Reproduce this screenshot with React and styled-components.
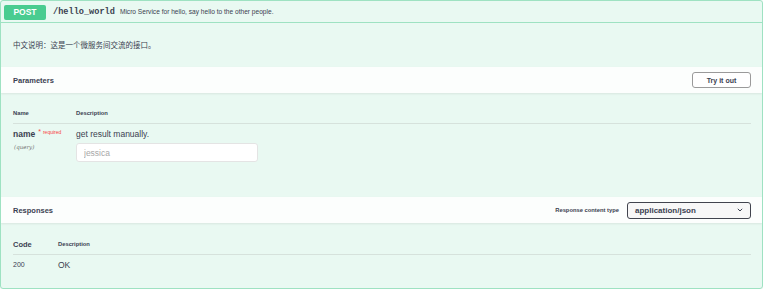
import React from 'react'
import styled, { createGlobalStyle } from 'styled-components'

const GlobalStyle = createGlobalStyle`
  body {
    margin: 0;
    background: #fff;
    font-family: "Liberation Sans", Arial, sans-serif;
    color: #3b4151;
  }
`

const Opblock = styled.div`
  box-sizing: border-box;
  width: 763px;
  height: 289px;
  border: 1px solid #9ee2c2;
  border-radius: 3px;
  background: rgba(73, 204, 144, 0.12);
  box-shadow: 0 0 2px rgba(0, 0, 0, 0.12);
  display: flex;
  flex-direction: column;
  overflow: hidden;
`

const Summary = styled.div`
  box-sizing: border-box;
  height: 22px;
  display: flex;
  align-items: center;
  padding: 0 3px;
  border-bottom: 1px solid #9ee2c2;
`

const Method = styled.span`
  width: 42px;
  height: 15px;
  border-radius: 2px;
  background: #49cc90;
  color: #fff;
  font-weight: bold;
  font-size: 8.5px;
  display: flex;
  align-items: center;
  justify-content: center;
  margin-top: 1px;
`

const Path = styled.span`
  margin-left: 7px;
  font-family: "Liberation Mono", "DejaVu Sans Mono", monospace;
  font-weight: bold;
  font-size: 8.6px;
`

const SummaryText = styled.span`
  margin-left: 5px;
  font-size: 6.6px;
  color: #3b4151;
`

const Description = styled.div`
  box-sizing: border-box;
  height: 44px;
  padding: 16px 12px 0;
  font-family: "Liberation Sans", "Noto Sans CJK SC", sans-serif;
  font-size: 7.5px;
`

const SectionHeader = styled.div`
  box-sizing: border-box;
  height: 26px;
  padding: 0 11px 0 12px;
  display: flex;
  align-items: center;
  justify-content: space-between;
  background: rgba(255, 255, 255, 0.85);
  box-shadow: 0 1px 2px rgba(0, 0, 0, 0.08);
`

const SectionTitle = styled.h4`
  margin: 0;
  font-size: 7.5px;
  font-weight: bold;
`

const TryButton = styled.button`
  box-sizing: border-box;
  width: 59px;
  height: 16px;
  border: 1.5px solid #9a9a9a;
  border-radius: 3px;
  background: #fff;
  font-family: "Liberation Sans", Arial, sans-serif;
  font-weight: bold;
  font-size: 7px;
  color: #3b4151;
  padding: 0;
`

const SectionBody = styled.div`
  box-sizing: border-box;
  height: ${p => p.$h}px;
  padding: 0 11px 0 12px;
`

const HeadRow = styled.div`
  display: flex;
  align-items: flex-end;
  border-bottom: 1px solid #d6e2dc;
  padding-top: ${p => p.$top}px;
  padding-bottom: ${p => p.$bottom}px;
`

const HeadCell = styled.div`
  width: ${p => p.$w}px;
  font-size: ${p => p.$size || 5.8}px;
  font-weight: bold;
  color: #3b4151;
  line-height: 9px;
`

const Row = styled.div`
  display: flex;
  padding-top: ${p => p.$top}px;
`

const Cell = styled.div`
  width: ${p => p.$w}px;
  display: flex;
  flex-direction: column;
`

const ParamName = styled.div`
  font-size: 8.5px;
  font-weight: bold;
  line-height: 10px;
`

const Required = styled.span`
  position: relative;
  top: -3px;
  margin-left: 3px;
  font-size: 5px;
  font-weight: normal;
  color: #f93e3e;

  &::before {
    content: '*';
    font-size: 7px;
    margin-right: 2px;
  }
`

const ParamIn = styled.div`
  margin-top: 4px;
  margin-left: 1px;
  font-family: "DejaVu Serif", "Liberation Serif", serif;
  font-style: italic;
  font-size: 5.5px;
  color: #707070;
`

const Text = styled.div`
  font-size: ${p => p.$size}px;
  line-height: 10px;
  color: #3b4151;
`

const Input = styled.input`
  box-sizing: border-box;
  width: 182px;
  height: 19px;
  margin-top: 4px;
  padding: 0 7px;
  border: 1px solid #e4e4e4;
  border-radius: 3px;
  background: #fff;
  font-family: "Liberation Sans", Arial, sans-serif;
  font-size: 8.5px;
  outline: none;

  &::placeholder {
    color: #a8a8a8;
  }
`

const ContentType = styled.div`
  display: flex;
  align-items: center;
  gap: 8px;
`

const Label = styled.span`
  font-size: 5.8px;
  font-weight: bold;
`

const Select = styled.div`
  box-sizing: border-box;
  width: 124px;
  height: 17px;
  border: 1.5px solid #41444e;
  border-radius: 3px;
  background: #f7f7f7;
  display: flex;
  align-items: center;
  justify-content: space-between;
  padding: 0 7px 0 7px;
  font-size: 8px;
  font-weight: bold;
`

const Chevron = () => (
  <svg width="6" height="4" viewBox="0 0 6 4">
    <path d="M0.8 0.8 L3 3 L5.2 0.8" fill="none" stroke="#3b4151" strokeWidth="1" />
  </svg>
)

export default function App() {
  return (
    <>
      <GlobalStyle />
      <Opblock>
        <Summary>
          <Method>POST</Method>
          <Path>/hello_world</Path>
          <SummaryText>Micro Service for hello, say hello to the other people.</SummaryText>
        </Summary>
        <Description>中文说明：这是一个微服务间交流的接口。</Description>

        <SectionHeader>
          <SectionTitle>Parameters</SectionTitle>
          <TryButton>Try it out</TryButton>
        </SectionHeader>
        <SectionBody $h={104}>
          <HeadRow $top={16} $bottom={5}>
            <HeadCell $w={63}>Name</HeadCell>
            <HeadCell>Description</HeadCell>
          </HeadRow>
          <Row $top={5}>
            <Cell $w={63}>
              <ParamName>
                name<Required>required</Required>
              </ParamName>
              <ParamIn>(query)</ParamIn>
            </Cell>
            <Cell>
              <Text $size={8.5}>get result manually.</Text>
              <Input placeholder="jessica" />
            </Cell>
          </Row>
        </SectionBody>

        <SectionHeader>
          <SectionTitle>Responses</SectionTitle>
          <ContentType>
            <Label>Response content type</Label>
            <Select>
              application/json
              <Chevron />
            </Select>
          </ContentType>
        </SectionHeader>
        <SectionBody $h={64}>
          <HeadRow $top={17} $bottom={5}>
            <HeadCell $w={45} $size={7.5}>Code</HeadCell>
            <HeadCell>Description</HeadCell>
          </HeadRow>
          <Row $top={5}>
            <Cell $w={45}>
              <Text $size={7}>200</Text>
            </Cell>
            <Cell>
              <Text $size={8.5}>OK</Text>
            </Cell>
          </Row>
        </SectionBody>
      </Opblock>
    </>
  )
}
